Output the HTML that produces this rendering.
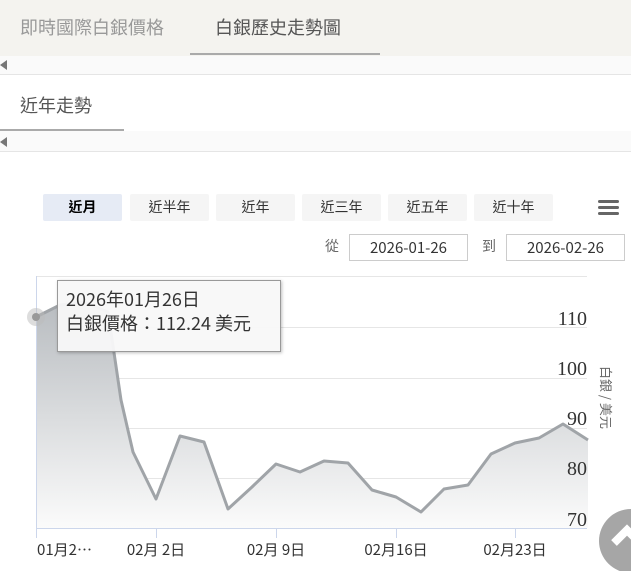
<!DOCTYPE html>
<html><head><meta charset="utf-8"><style>
body{margin:0;width:631px;height:571px;overflow:hidden;background:#fff;font-family:"Liberation Sans","Noto Sans CJK TC",sans-serif;position:relative}
.a{position:absolute}
.btn{position:absolute;top:194px;height:27px;width:79px;background:#f5f5f5;border-radius:2px;font-size:14px;color:#333;text-align:center;line-height:27px}
.inp{position:absolute;top:234px;height:25px;border:1px solid #ccc;font-size:15px;color:#333;line-height:25px;text-align:center;font-family:"Noto Sans CJK TC",sans-serif}
</style></head><body>
<div class="a" style="left:0;top:0;width:631px;height:56px;background:#f4f3ef"></div>
<div class="a" style="left:20px;top:14px;font-size:18px;color:#999">即時國際白銀價格</div>
<div class="a" style="left:215px;top:14px;font-size:18px;color:#555">白銀歷史走勢圖</div>
<div class="a" style="left:190px;top:53px;width:190px;height:2px;background:#aaa"></div>
<div class="a" style="left:0;top:56px;width:631px;height:18px;background:#fafafa;border-bottom:1px solid #e5e5e5"></div>
<div class="a" style="left:0;top:60px;width:0;height:0;border:5px solid transparent;border-right:7px solid #777;border-left:0"></div>
<div class="a" style="left:20px;top:92px;font-size:18px;color:#555">近年走勢</div>
<div class="a" style="left:0;top:129px;width:124px;height:2px;background:#aaa"></div>
<div class="a" style="left:0;top:131px;width:631px;height:20px;background:#fafafa;border-bottom:1px solid #e5e5e5"></div>
<div class="a" style="left:0;top:137px;width:0;height:0;border:5px solid transparent;border-right:7px solid #777;border-left:0"></div>
<div class="btn" style="left:43px;background:#e6ebf5;font-weight:bold;color:#000">近月</div>
<div class="btn" style="left:130px">近半年</div>
<div class="btn" style="left:216px">近年</div>
<div class="btn" style="left:302px">近三年</div>
<div class="btn" style="left:388px">近五年</div>
<div class="btn" style="left:474px">近十年</div>
<div class="a" style="left:598px;top:200px;width:21px;height:3px;background:#666;border-radius:2px;box-shadow:0 6px 0 #666,0 12px 0 #666"></div>
<div class="a" style="left:325px;top:236px;font-size:14px;color:#666">從</div>
<div class="inp" style="left:349px;width:117px">2026-01-26</div>
<div class="a" style="left:482px;top:236px;font-size:14px;color:#666">到</div>
<div class="inp" style="left:506px;width:117px">2026-02-26</div>
<svg class="a" style="left:0;top:260px" width="631" height="311">
<defs><linearGradient id="g" x1="0" y1="0" x2="0" y2="1"><stop offset="0" stop-color="#b8bcc0"/><stop offset="1" stop-color="#fbfbfb"/></linearGradient></defs>
<g stroke="#e6e6e6" stroke-width="1"><line x1="36" x2="587" y1="16.5" y2="16.5"/><line x1="36" x2="587" y1="67.5" y2="67.5"/><line x1="36" x2="587" y1="118.5" y2="118.5"/><line x1="36" x2="587" y1="168.5" y2="168.5"/><line x1="36" x2="587" y1="218.5" y2="218.5"/></g>
<path d="M36,57 L60,45 L84,42 L108,52 L121,140 L133,192 L156,239 L180,176 L204,182 L228,249 L252,227 L276,204 L300,212 L324,201 L348,203 L372,230 L396,237 L421,252 L444,229 L468,225 L491,194 L515,183 L539,178 L563,164 L588,180 L588,268 L36,268Z" fill="url(#g)"/>
<path d="M36,57 L60,45 L84,42 L108,52 L121,140 L133,192 L156,239 L180,176 L204,182 L228,249 L252,227 L276,204 L300,212 L324,201 L348,203 L372,230 L396,237 L421,252 L444,229 L468,225 L491,194 L515,183 L539,178 L563,164 L588,180" fill="none" stroke="#a0a4a8" stroke-width="3" stroke-linejoin="round"/>
<line x1="36" x2="587" y1="268.5" y2="268.5" stroke="#ccd6eb"/>
<line x1="36.5" x2="36.5" y1="16" y2="278" stroke="#ccd6eb"/>
<g stroke="#ccd6eb"><line x1="156.5" x2="156.5" y1="268" y2="278"/><line x1="276.5" x2="276.5" y1="268" y2="278"/><line x1="396.5" x2="396.5" y1="268" y2="278"/><line x1="515.5" x2="515.5" y1="268" y2="278"/></g>
<circle cx="36" cy="57" r="9" fill="#bbb" opacity=".5"/><circle cx="36" cy="57" r="4" fill="#999"/>
<g font-family="Liberation Serif,serif" font-size="20" fill="#333" text-anchor="end"><text x="587" y="65">110</text><text x="587" y="115">100</text><text x="587" y="165">90</text><text x="587" y="215">80</text><text x="587" y="266">70</text></g>
<g font-size="15" fill="#333" font-family="Noto Sans CJK TC,sans-serif"><text x="37" y="295">01月2…</text><text x="156" y="295" text-anchor="middle">02月 2日</text><text x="276" y="295" text-anchor="middle">02月 9日</text><text x="396" y="295" text-anchor="middle">02月16日</text><text x="515" y="295" text-anchor="middle">02月23日</text></g>
<text transform="translate(601,106) rotate(90)" font-size="13" fill="#666" font-family="Noto Sans CJK TC,sans-serif">白銀 / 美元</text>
<circle cx="631" cy="281" r="32" fill="#a6a6a6"/>
<path d="M614,283 L627,270 L640,283" fill="none" stroke="#fff" stroke-width="8"/>
</svg>
<div class="a" style="left:57px;top:280px;width:222px;height:70px;background:rgba(248,248,248,.95);border:1px solid #999;box-shadow:1px 1px 3px rgba(0,0,0,.25)"></div>
<div class="a" style="left:66px;top:287px;font-size:18px;color:#333;line-height:24px;font-family:'Noto Sans CJK TC',sans-serif">2026年01月26日<br>白銀價格：112.24 美元</div>
</body></html>
